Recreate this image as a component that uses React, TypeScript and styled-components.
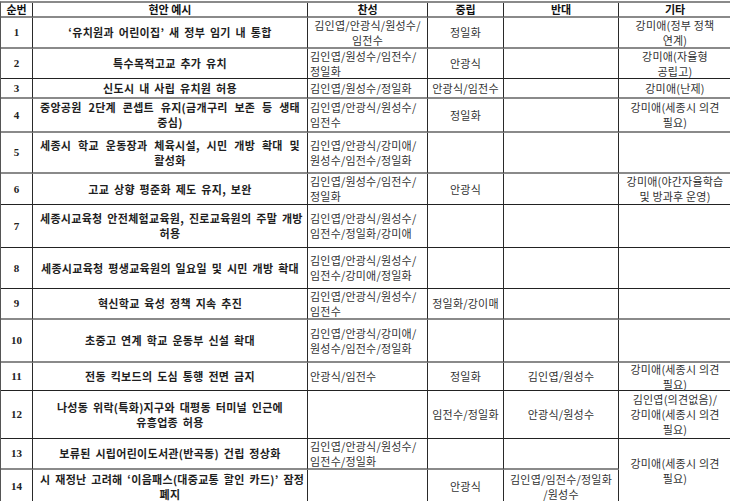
import React from 'react';
import styled, { createGlobalStyle } from 'styled-components';

type Align = 'left' | 'center';

interface Line {
    text: string;
    justify?: boolean;
}

interface Row {
    height: number;
    thick?: boolean;
    issue: Line[];
    yes: string[];
    yesAlign?: Align;
    neutral: string[];
    against: string[];
    etc?: string[];
    etcSpan?: number;
}

const GlobalStyle = createGlobalStyle`
    html, body {
        margin: 0;
        padding: 0;
        background: #ffffff;
    }
    body {
        font-family: "Noto Sans CJK KR", "Noto Sans", sans-serif;
        font-size: 11px;
        color: #333333;
    }
`;

const Sheet = styled.div`
    margin-top: 1px;
    width: 730px;
    display: grid;
    grid-template-columns: 32px 275px 120px 76px 115px 112px;
    border-top: 2px solid #8a8a8a;
    border-left: 1px solid #555555;
    box-sizing: border-box;
`;

const Cell = styled.div<{ $align?: Align; $thick?: boolean; $last?: boolean; $span?: number }>`
    box-sizing: border-box;
    display: flex;
    flex-direction: column;
    justify-content: center;
    align-items: ${p => (p.$align === 'left' ? 'flex-start' : 'center')};
    text-align: ${p => (p.$align === 'left' ? 'left' : 'center')};
    padding: 0 2px;
    line-height: 15px;
    white-space: nowrap;
    min-width: 0;
    overflow: visible;
    border-right: ${p => (p.$last ? 'none' : '1px solid #2a2a2a')};
    border-bottom: ${p => (p.$thick ? '2px solid #8a8a8a' : '1px solid #222222')};
    grid-row: ${p => (p.$span ? `span ${p.$span}` : 'auto')};
`;

const HeadCell = styled(Cell)`
    font-weight: 700;
    color: #111111;
`;

const NumCell = styled(Cell)`
    font-family: "Liberation Serif", "Times New Roman", serif;
    font-weight: 700;
    color: #222222;
`;

const IssueCell = styled(Cell)`
    padding: 0 7px;
    font-weight: 700;
    color: #1e1e1e;
    letter-spacing: 0.3px;
    word-spacing: 2px;
`;

const IssueLine = styled.div<{ $justify?: boolean }>`
    align-self: ${p => (p.$justify ? 'stretch' : 'center')};
    text-align: ${p => (p.$justify ? 'justify' : 'center')};
    text-align-last: ${p => (p.$justify ? 'justify' : 'center')};
`;

const NameLine = styled.div`
    letter-spacing: 0.2px;
`;

const l = (text: string, justify = false): Line => ({ text, justify });

const rows: Row[] = [
    {
        height: 31, thick: true,
        issue: [l('‘유치원과 어린이집’ 새 정부 임기 내 통합')],
        yes: ['김인엽/안광식/원성수/', '임전수'], yesAlign: 'center',
        neutral: ['정일화'], against: [], etc: ['강미애(정부 정책', '연계)'],
    },
    {
        height: 30,
        issue: [l('특수목적고교 추가 유치')],
        yes: ['김인엽/원성수/임전수/', '정일화'],
        neutral: ['안광식'], against: [], etc: ['강미애(자율형', '공립고)'],
    },
    {
        height: 20, thick: true,
        issue: [l('신도시 내 사립 유치원 허용')],
        yes: ['김인엽/원성수/정일화'],
        neutral: ['안광식/임전수'], against: [], etc: ['강미애(난제)'],
    },
    {
        height: 34, thick: true,
        issue: [l('중앙공원 2단계 콘셉트 유지(금개구리 보존 등 생태', true), l('중심)')],
        yes: ['김인엽/안광식/원성수/', '임전수'],
        neutral: ['정일화'], against: [], etc: ['강미애(세종시 의견', '필요)'],
    },
    {
        height: 41, thick: true,
        issue: [l('세종시 학교 운동장과 체육시설, 시민 개방 확대 및', true), l('활성화')],
        yes: ['김인엽/안광식/강미애/', '원성수/임전수/정일화'],
        neutral: [], against: [], etc: [],
    },
    {
        height: 31,
        issue: [l('고교 상향 평준화 제도 유지, 보완')],
        yes: ['김인엽/원성수/임전수/', '정일화'],
        neutral: ['안광식'], against: [], etc: ['강미애(야간자율학습', '및 방과후 운영)'],
    },
    {
        height: 43,
        issue: [l('세종시교육청 안전체험교육원, 진로교육원의 주말 개방', true), l('허용')],
        yes: ['김인엽/안광식/원성수/', '임전수/정일화/강미애'],
        neutral: [], against: [], etc: [],
    },
    {
        height: 41,
        issue: [l('세종시교육청 평생교육원의 일요일 및 시민 개방 확대')],
        yes: ['김인엽/안광식/원성수/', '임전수/강미애/정일화'],
        neutral: [], against: [], etc: [],
    },
    {
        height: 31, thick: true,
        issue: [l('혁신학교 육성 정책 지속 추진')],
        yes: ['김인엽/안광식/원성수/', '임전수'],
        neutral: ['정일화/강이매'], against: [], etc: [],
    },
    {
        height: 43, thick: true,
        issue: [l('초중고 연계 학교 운동부 신설 확대')],
        yes: ['김인엽/안광식/강미애/', '원성수/임전수/정일화'],
        neutral: [], against: [], etc: [],
    },
    {
        height: 28,
        issue: [l('전동 킥보드의 도심 통행 전면 금지')],
        yes: ['안광식/임전수'],
        neutral: ['정일화'], against: ['김인엽/원성수'], etc: ['강미애(세종시 의견', '필요)'],
    },
    {
        height: 48,
        issue: [l('나성동 위락(특화)지구와 대평동 터미널 인근에'), l('유흥업종 허용')],
        yes: [],
        neutral: ['임전수/정일화'], against: ['안광식/원성수'],
        etc: ['김인엽(의견없음)/', '강미애(세종시 의견', '필요)'],
    },
    {
        height: 31, thick: true,
        issue: [l('보류된 시립어린이도서관(반곡동) 건립 정상화')],
        yes: ['김인엽/안광식/원성수/', '임전수/정일화'],
        neutral: [], against: [], etc: ['강미애(세종시 의견', '필요)'], etcSpan: 2,
    },
    {
        height: 34,
        issue: [l('시 재정난 고려해 ‘이음패스(대중교통 할인 카드)’ 잠정', true), l('폐지')],
        yes: [],
        neutral: ['안광식'], against: ['김인엽/임전수/정일화', '/원성수'],
    },
];

const headers = ['순번', '현안 예시', '찬성', '중립', '반대', '기타'];

const names = (list: string[]) => list.map((t, i) => <NameLine key={i}>{t}</NameLine>);

const App = (): JSX.Element => {
    const template = ['15px', ...rows.map(r => `${r.height}px`)].join(' ');

    return (
        <>
            <GlobalStyle />
            <Sheet style={{ gridTemplateRows: template }}>
                {headers.map((h, i) => (
                    <HeadCell key={h} $thick $last={i === headers.length - 1}>{h}</HeadCell>
                ))}
                {rows.map((row, idx) => (
                    <React.Fragment key={idx}>
                        <NumCell $thick={row.thick}>{idx + 1}</NumCell>
                        <IssueCell $thick={row.thick}>
                            {row.issue.map((line, i) => (
                                <IssueLine key={i} $justify={line.justify}>{line.text}</IssueLine>
                            ))}
                        </IssueCell>
                        <Cell $thick={row.thick} $align={row.yesAlign ?? 'left'}>{names(row.yes)}</Cell>
                        <Cell $thick={row.thick}>{names(row.neutral)}</Cell>
                        <Cell $thick={row.thick}>{names(row.against)}</Cell>
                        {row.etc && (
                            <Cell $thick={row.thick} $last $span={row.etcSpan}>{names(row.etc)}</Cell>
                        )}
                    </React.Fragment>
                ))}
            </Sheet>
        </>
    );
};

export default App;
